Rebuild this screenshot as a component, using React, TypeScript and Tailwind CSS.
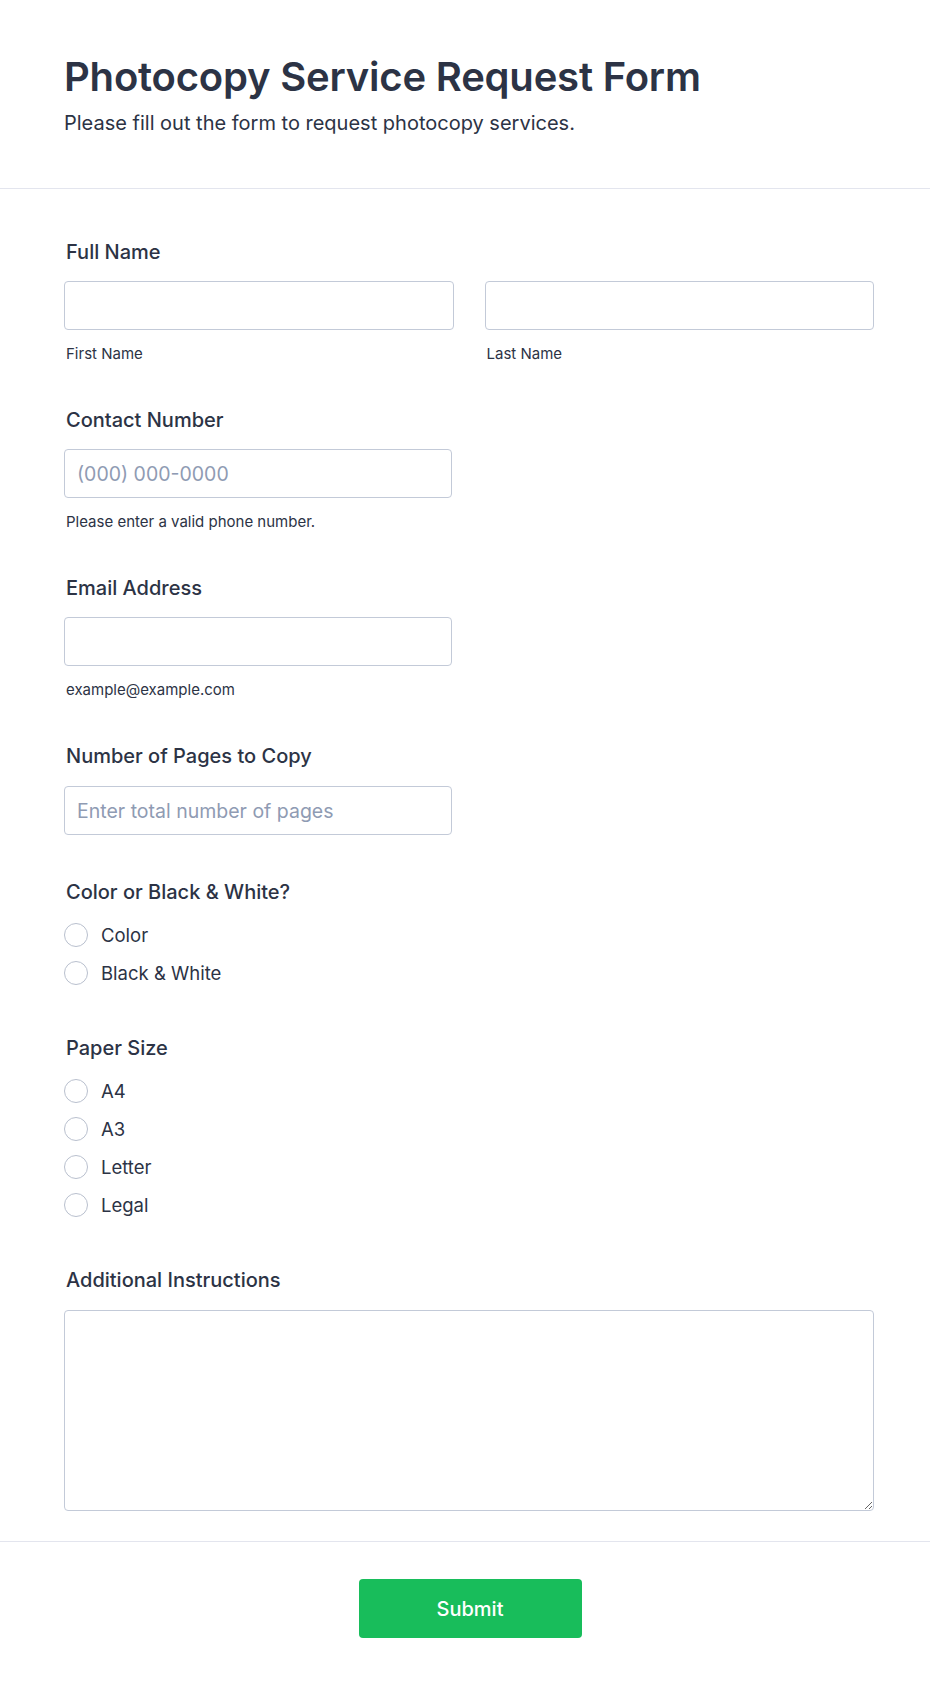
import { useState } from "react";

type Option = { value: string; label: string };

function Label({ children }: { children: React.ReactNode }) {
  return (
    <label className="block pl-0.5 text-[20px] leading-7 font-medium text-[#2c3345]">
      {children}
    </label>
  );
}

function TextField({
  placeholder,
  className = "",
}: {
  placeholder?: string;
  className?: string;
}) {
  return (
    <input
      type="text"
      placeholder={placeholder}
      className={`h-[49px] rounded-[4px] border border-[#c3cad8] bg-white px-3 text-[19.5px] text-[#2c3345] outline-none placeholder:text-[#8f9bb3] ${className}`}
    />
  );
}

function Sublabel({ children }: { children: React.ReactNode }) {
  return (
    <p className="mt-[14px] pl-0.5 text-[15px] leading-[19px] text-[#2c3345]">
      {children}
    </p>
  );
}

function RadioGroup({ name, options }: { name: string; options: Option[] }) {
  const [value, setValue] = useState("");

  return (
    <div className="mt-[10px] -mb-px flex flex-col">
      {options.map((o) => (
        <label
          key={o.value}
          className="flex h-[38px] cursor-pointer items-center gap-[13px]"
        >
          <input
            type="radio"
            name={name}
            value={o.value}
            checked={value === o.value}
            onChange={() => setValue(o.value)}
            className="sr-only"
          />
          <span className="flex h-6 w-6 items-center justify-center rounded-full border-[1.5px] border-[#b9c0ce] bg-white">
            {value === o.value && (
              <span className="h-3 w-3 rounded-full bg-[#2e69ff]" />
            )}
          </span>
          <span className="text-[18.5px] leading-7 text-[#2c3345]">
            {o.label}
          </span>
        </label>
      ))}
    </div>
  );
}

export default function App() {
  return (
    <div className="min-h-[1688px] bg-white font-['Inter','Noto_Sans',sans-serif] text-[#2c3345]">
      <header className="border-b border-[#e3e5ee] pt-[53px] pb-[51px] pl-16 pr-14">
        <h1 className="text-[40px] leading-[48px] font-semibold tracking-[-0.2px] text-[#2c3345]">
          Photocopy Service Request Form
        </h1>
        <p className="mt-[8px] text-[20px] leading-7 text-[#2c3345]">
          Please fill out the form to request photocopy services.
        </p>
      </header>

      <form
        onSubmit={(e) => e.preventDefault()}
        className="flex flex-col gap-[43px] border-b border-[#e3e5ee] pt-[49px] pb-[30px] pl-16 pr-14"
      >
        <div>
          <Label>Full Name</Label>
          <div className="mt-[15px] grid grid-cols-2 gap-[31px]">
            <div className="flex flex-col">
              <TextField className="w-full" />
              <Sublabel>First Name</Sublabel>
            </div>
            <div className="flex flex-col">
              <TextField className="w-full" />
              <Sublabel>Last Name</Sublabel>
            </div>
          </div>
        </div>

        <div>
          <Label>Contact Number</Label>
          <div className="mt-[15px]">
            <TextField placeholder="(000) 000-0000" className="w-[388px]" />
          </div>
          <Sublabel>Please enter a valid phone number.</Sublabel>
        </div>

        <div>
          <Label>Email Address</Label>
          <div className="mt-[15px]">
            <TextField className="w-[388px]" />
          </div>
          <Sublabel>example@example.com</Sublabel>
        </div>

        <div>
          <Label>Number of Pages to Copy</Label>
          <div className="mt-[16px]">
            <TextField
              placeholder="Enter total number of pages"
              className="w-[388px]"
            />
          </div>
        </div>

        <div>
          <Label>Color or Black &amp; White?</Label>
          <RadioGroup
            name="color"
            options={[
              { value: "color", label: "Color" },
              { value: "bw", label: "Black & White" },
            ]}
          />
        </div>

        <div>
          <Label>Paper Size</Label>
          <RadioGroup
            name="paper"
            options={[
              { value: "a4", label: "A4" },
              { value: "a3", label: "A3" },
              { value: "letter", label: "Letter" },
              { value: "legal", label: "Legal" },
            ]}
          />
        </div>

        <div>
          <Label>Additional Instructions</Label>
          <textarea className="mt-[16px] block h-[201px] w-full rounded-[4px] border border-[#c3cad8] bg-white px-3 py-3 text-[19.5px] text-[#2c3345] outline-none" />
        </div>
      </form>

      <div className="flex justify-center pt-[37px] pb-[50px] pl-[66px] pr-14">
        <button
          type="submit"
          className="h-[59px] w-[223px] rounded-[4px] bg-[#18bd5b] text-[20px] font-medium text-white"
        >
          Submit
        </button>
      </div>
    </div>
  );
}
